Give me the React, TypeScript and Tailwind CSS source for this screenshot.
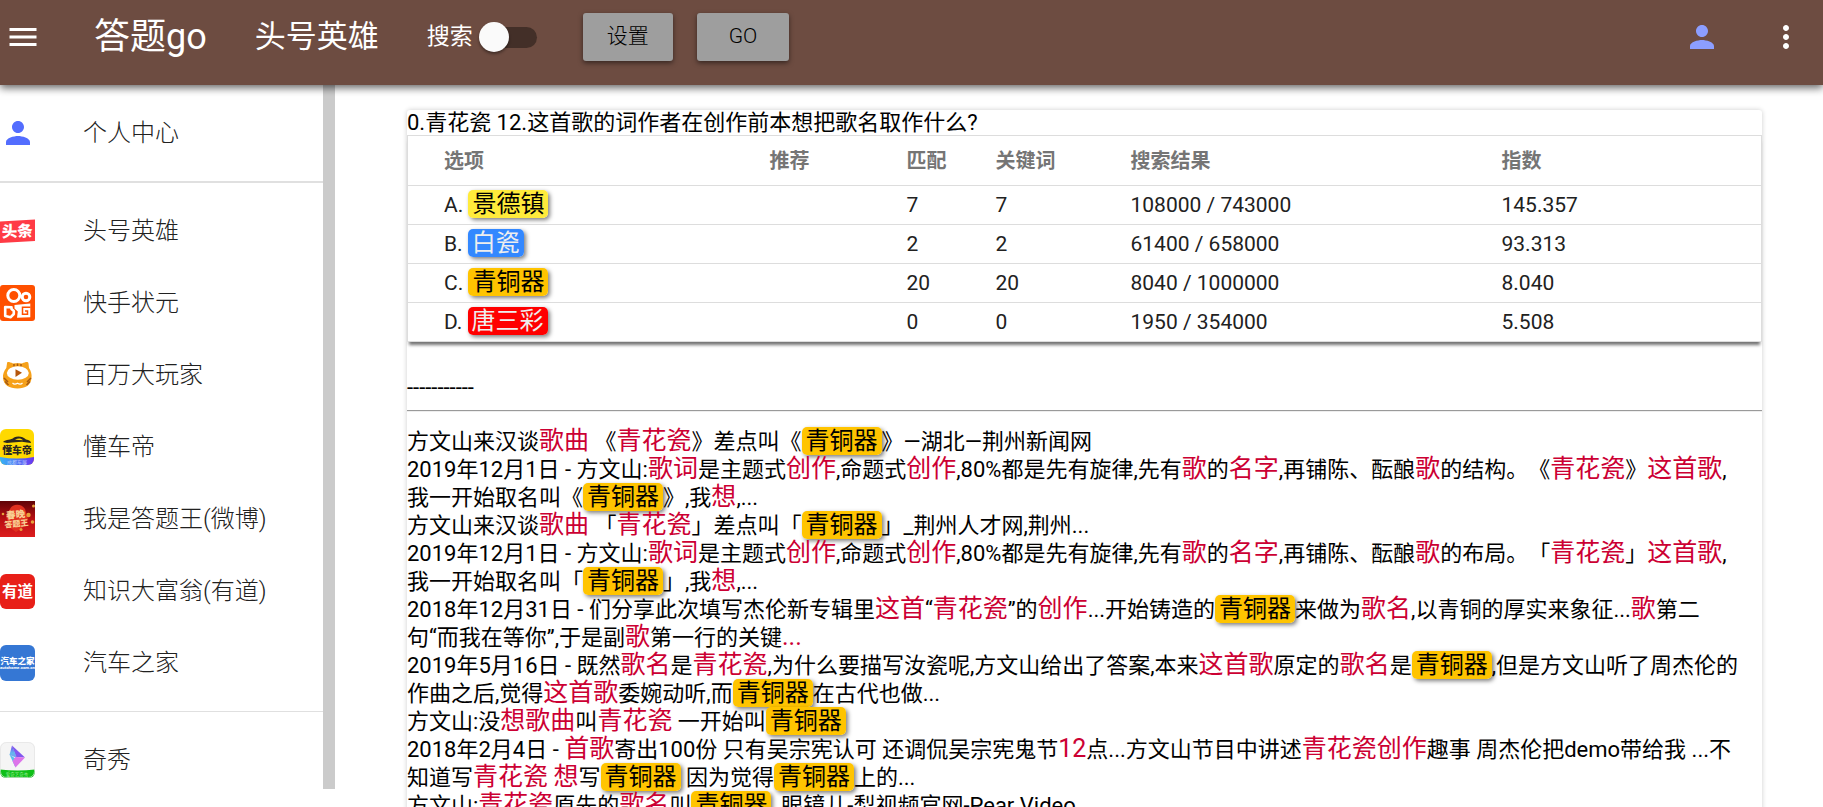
import React from "react";
import { MdMenu, MdMoreVert, MdPerson } from "react-icons/md";

const cjk = "'Noto Sans CJK SC', sans-serif";

function ToutiaoLogo() {
  return (
    <svg viewBox="0 0 35 36" className="h-9 w-[35px]" aria-hidden="true">
      <path d="M0 8.5 35 6.5V28L0 30Z" fill="#ff3b45" />
      <text x="17.3" y="23.8" textAnchor="middle" fontSize="15.5" fontWeight="900" fill="#fff" fontFamily={cjk} transform="rotate(-2 17 18)">头条</text>
    </svg>
  );
}

function KuaishouLogo() {
  return (
    <svg viewBox="0 0 35 36" className="h-9 w-[35px]" aria-hidden="true">
      <rect width="35" height="36" rx="3" fill="#ff5000" />
      <g fill="none" stroke="#fff" strokeWidth="3">
        <circle cx="13.8" cy="10.5" r="6" />
        <circle cx="26" cy="12" r="3.8" />
      </g>
      <path d="M5.2 22 11.5 22.3V24L13.800 26V29L10.5 32.3 5.2 31Z" fill="none" stroke="#fff" strokeWidth="2.6" strokeLinejoin="round" />
      <path d="M14.500 20 30.300 18.500V32.300L17 32.800 17.800 26.500 14.500 23.500Z" fill="#fff" />
      <path d="M30.500 22.300H22.500V29.300H27.500V26H25" fill="none" stroke="#ff5000" strokeWidth="1.500" />
    </svg>
  );
}

function PlayerLogo() {
  return (
    <svg viewBox="0 0 35 36" className="h-9 w-[35px]" aria-hidden="true">
      <path d="M7 6.5C7 4.5 9 4.8 13 6.6 16 6 19 6 22 6.6 26 4.8 28 4.5 28.5 6.5L29 11C31 14 32 17 31.5 21 31 28 25.5 31.5 17.5 31.5S3.500 28 3 21C2.600 17 4 14 6.300 11Z" fill="#f6a11a" />
      <path d="M4 21 8 25M31 21 27 25M5 24.500 8.500 28M30 24.500 26.500 28M14 7V9.500M17.500 6.500V9M21 7V9.500" stroke="#a65a12" strokeWidth="1.500" />
      <ellipse cx="17.800" cy="16" rx="11" ry="6.800" fill="#fff" />
      <path d="M15.500 12.200 22 15.800 15.500 20Z" fill="#b4560d" />
      <path d="M12.500 26Q14.500 28 17.500 26.200 20.500 28 22.500 26" fill="none" stroke="#fff" strokeWidth="1.200" />
    </svg>
  );
}

function DongchediLogo() {
  return (
    <svg viewBox="0 0 35 36" className="h-9 w-[35px]" aria-hidden="true">
      <defs>
        <linearGradient id="dcd">
          <stop offset="0" stopColor="#38b4f5" />
          <stop offset="1" stopColor="#6a35f2" />
        </linearGradient>
        <clipPath id="dcdClip"><rect width="34" height="36" rx="6" /></clipPath>
      </defs>
      <g clipPath="url(#dcdClip)">
        <rect width="34" height="36" fill="#ffd900" />
        <path d="M0 28Q17 31 34 28V36H0Z" fill="url(#dcd)" />
        <path d="M3 13C6 10 11 11.500 14 8.500 18 6.500 23 7.500 26 10.500 29 11 31 12 31 14L27 13.500 22 12.800 12 13.500 7 14Z" fill="#2a2720" />
        <path d="M15 10.800C18 9 21 9.200 23 11.200Z" fill="#ffd900" />
        <text x="17" y="24.500" textAnchor="middle" fontSize="9.800" fontWeight="900" fill="#2a2720" fontFamily={cjk}>懂车帝</text>
        <text x="17" y="34.500" textAnchor="middle" fontSize="5" fill="#d5e4ff" fontFamily={cjk}>成都车展</text>
      </g>
    </svg>
  );
}

function WeiboQuizLogo() {
  return (
    <svg viewBox="0 0 35 36" className="h-9 w-[35px]" aria-hidden="true">
      <defs>
        <linearGradient id="wbg" x2="0" y2="1">
          <stop offset="0" stopColor="#5f0306" />
          <stop offset=".5" stopColor="#b80f12" />
          <stop offset="1" stopColor="#dc1d1d" />
        </linearGradient>
      </defs>
      <rect width="35" height="36" fill="url(#wbg)" />
      <path d="M10 8C13 2 22 3 25 8L28 18 22 27 16 31 9 26 6 15Z" fill="#e0301f" />
      <g fill="#e7a13c">
        <circle cx="33.500" cy="5" r="1.500" />
        <circle cx="28.500" cy="14" r="2.200" />
        <circle cx="32.500" cy="21" r="1.800" />
        <circle cx="3" cy="13" r="1.300" />
        <circle cx="21" cy="28.500" r="1.500" />
      </g>
      <g fill="#f8cf93" fontWeight="900" fontFamily={cjk} textAnchor="middle" transform="rotate(-6 17 18)">
        <text x="16" y="17" fontSize="9.500">春晚</text>
        <text x="16" y="25.500" fontSize="8">答题王</text>
      </g>
    </svg>
  );
}

function YoudaoLogo() {
  return (
    <svg viewBox="0 0 35 36" className="h-9 w-[35px]" aria-hidden="true">
      <rect y="1" width="35" height="35" rx="6" fill="#e81f18" />
      <text x="17.500" y="24" textAnchor="middle" fontSize="15.500" fontWeight="700" fill="#fff" fontFamily={cjk}>有道</text>
    </svg>
  );
}

function AutohomeLogo() {
  return (
    <svg viewBox="0 0 35 36" className="h-9 w-[35px]" aria-hidden="true">
      <rect width="35" height="36" rx="6" fill="#3577d4" />
      <text x="17.500" y="18.500" textAnchor="middle" fontSize="8.500" fontWeight="900" fill="#fff" fontFamily={cjk}>汽车之家</text>
      <text x="17.500" y="23.800" textAnchor="middle" fontSize="4.300" fontWeight="700" fill="#fff" fontFamily="Roboto, sans-serif">autohome.com.cn</text>
    </svg>
  );
}

function QixiuLogo() {
  return (
    <svg viewBox="0 0 35 36" className="h-9 w-[35px]" aria-hidden="true">
      <defs>
        <clipPath id="qxClip"><rect width="35" height="36" rx="6" /></clipPath>
        <linearGradient id="qxa" x2="0" y2="1">
          <stop offset="0" stopColor="#7a3df0" />
          <stop offset=".6" stopColor="#62b9ee" />
          <stop offset="1" stopColor="#7f9bee" />
        </linearGradient>
      </defs>
      <g clipPath="url(#qxClip)">
        <rect width="35" height="36" fill="#f5f5f5" />
        <path d="M0 27.500Q17.500 29.500 35 27.500V36H0Z" fill="#0fbf17" />
        <path d="M12 3.500 25 15.500 16 15Z" fill="#8257ee" />
        <path d="M9.500 12.500 16 17 15.500 25.500Z" fill="#58c0ec" />
        <path d="M12 3.500 17 16 9.500 13Z" fill="url(#qxa)" />
        <path d="M25 15.500 15.500 15 12.500 19 15.500 25.500Z" fill="#dd74ea" />
        <text x="17" y="33.500" textAnchor="middle" fontSize="4.500" fill="#b5f5b0" fontFamily={cjk}>爱奇艺奇秀</text>
      </g>
      <rect x=".5" y=".5" width="34" height="35" rx="6" fill="none" stroke="#e4e4e4" strokeWidth=".7" />
    </svg>
  );
}

const channels = [
  { name: "头号英雄", Logo: ToutiaoLogo },
  { name: "快手状元", Logo: KuaishouLogo },
  { name: "百万大玩家", Logo: PlayerLogo },
  { name: "懂车帝", Logo: DongchediLogo },
  { name: "我是答题王(微博)", Logo: WeiboQuizLogo },
  { name: "知识大富翁(有道)", Logo: YoudaoLogo },
  { name: "汽车之家", Logo: AutohomeLogo },
];

const options = [
  { key: "A.", name: "景德镇", tone: "bg-[#ffeb3b] text-black", match: "7", words: "7", results: "108000 / 743000", score: "145.357" },
  { key: "B.", name: "白瓷", tone: "bg-[#3388ff] text-[#eeeeee]", match: "2", words: "2", results: "61400 / 658000", score: "93.313" },
  { key: "C.", name: "青铜器", tone: "bg-[#ffc400] text-black", match: "20", words: "20", results: "8040 / 1000000", score: "8.040" },
  { key: "D.", name: "唐三彩", tone: "bg-[#ff0000] text-[#eeeeee]", match: "0", words: "0", results: "1950 / 354000", score: "5.508" },
];

// *text* marks a matched keyword, [text] marks an answer option.
const lines = [
  "方文山来汉谈*歌曲* 《*青花瓷*》差点叫《[青铜器]》—湖北—荆州新闻网",
  "2019年12月1日 - 方文山:*歌词*是主题式*创作*,命题式*创作*,80%都是先有旋律,先有*歌*的*名字*,再铺陈、酝酿*歌*的结构。《*青花瓷*》*这首歌*,",
  "我一开始取名叫《[青铜器]》,我*想*,...",
  "方文山来汉谈*歌曲* 「*青花瓷*」差点叫「[青铜器]」_荆州人才网,荆州...",
  "2019年12月1日 - 方文山:*歌词*是主题式*创作*,命题式*创作*,80%都是先有旋律,先有*歌*的*名字*,再铺陈、酝酿*歌*的布局。「*青花瓷*」*这首歌*,",
  "我一开始取名叫「[青铜器]」,我*想*,...",
  "2018年12月31日 - 们分享此次填写杰伦新专辑里*这首*“*青花瓷*”的*创作*...开始铸造的[青铜器]来做为*歌名*,以青铜的厚实来象征...*歌*第二",
  "句“而我在等你”,于是副*歌*第一行的关键*...*",
  "2019年5月16日 - 既然*歌名*是*青花瓷*,为什么要描写汝瓷呢,方文山给出了答案,本来*这首歌*原定的*歌名*是[青铜器],但是方文山听了周杰伦的",
  "作曲之后,觉得*这首歌*委婉动听,而[青铜器]在古代也做...",
  "方文山:没*想歌曲*叫*青花瓷* 一开始叫[青铜器]",
  "2018年2月4日 - *首歌*寄出100份 只有吴宗宪认可 还调侃吴宗宪鬼节*12*点...方文山节目中讲述*青花瓷创作*趣事 周杰伦把demo带给我 ...不",
  "知道写*青花瓷* *想*写[青铜器] 因为觉得[青铜器]上的...",
  "方文山:*青花瓷*原先的*歌名*叫[青铜器]_眼镜儿-梨视频官网-Pear Video",
];

function Badge({ tone, children }: { tone: string; children: React.ReactNode }) {
  return (
    <span className={`rounded-[5px] px-1 text-2xl leading-none shadow-[2px_2px_4px_rgba(0,0,0,0.5)] ${tone}`}>
      {children}
    </span>
  );
}

function ResultLine({ source }: { source: string }) {
  return (
    <p className="whitespace-nowrap">
      {source.split(/(\*[^*]+\*|\[[^\]]+\])/).map((part, i) => {
        if (part.startsWith("*"))
          return <em key={i} className="text-[25px] leading-none text-[#cc0033] not-italic">{part.slice(1, -1)}</em>;
        if (part.startsWith("["))
          return <Badge key={i} tone="bg-[#ffc400] text-black">{part.slice(1, -1)}</Badge>;
        return part;
      })}
    </p>
  );
}

function NavItem({ name, children }: { name: string; children: React.ReactNode }) {
  return (
    <li>
      <a href="#" className="flex h-[72px] items-center gap-12 text-2xl font-light text-[#212121]">
        <span className="flex w-[35px] shrink-0 justify-center">{children}</span>
        {name}
      </a>
    </li>
  );
}

export default function App() {
  return (
    <div className="flex h-screen flex-col overflow-hidden bg-white font-[Roboto,'Noto_Sans_CJK_SC',sans-serif] [text-spacing-trim:space-all]">
      <header className="z-10 flex h-[85px] shrink-0 items-center bg-[#6d4c41] pr-[19px] pb-[11px] pl-[5px] text-white shadow-[0_3px_8px_rgba(0,0,0,0.6)]">
        <button type="button" aria-label="菜单"><MdMenu className="size-9" /></button>
        <h1 className="ml-[53px] text-4xl">答题go</h1>
        <span className="ml-12 text-[31px]">头号英雄</span>
        <label className="ml-12 flex items-center gap-3 text-[23px]">
          搜索
          <input
            type="checkbox"
            className="flex h-[21px] w-[52px] appearance-none items-center rounded-full bg-[#432f28] before:-ml-1.5 before:block before:size-[30px] before:shrink-0 before:rounded-full before:bg-[#fafafa] before:shadow-[0_2px_3px_rgba(0,0,0,0.4)] checked:justify-end"
          />
        </label>
        <button type="button" className="ml-[46px] h-12 rounded-[3px] bg-[#9e9e9e] px-6 text-[21px] font-light text-black shadow-[0_2px_5px_rgba(0,0,0,0.5)]">设置</button>
        <button type="button" className="ml-6 h-12 rounded-[3px] bg-[#9e9e9e] px-8 text-[21px] font-light text-black shadow-[0_2px_5px_rgba(0,0,0,0.5)]">GO</button>
        <button type="button" aria-label="个人中心" className="ml-auto text-[#8c9eff]"><MdPerson className="size-9" /></button>
        <button type="button" aria-label="更多" className="ml-12"><MdMoreVert className="size-9" /></button>
      </header>

      <div className="flex min-h-0 flex-1">
        <nav className="mb-[18px] w-[335px] shrink-0 overflow-hidden border-r-[12px] border-[#cbcbcb]">
          <ul className="border-b-2 border-[#e0e0e0] py-3">
            <NavItem name="个人中心"><MdPerson className="size-9 shrink-0 text-[#536dfe]" /></NavItem>
          </ul>
          <ul className="border-b border-[#e0e0e0] py-3">
            {channels.map(({ name, Logo }) => (
              <NavItem key={name} name={name}><Logo /></NavItem>
            ))}
          </ul>
          <ul className="py-3">
            <NavItem name="奇秀"><QixiuLogo /></NavItem>
          </ul>
        </nav>

        <main className="min-w-0 flex-1 overflow-hidden pt-[25px] pr-[61px] pl-[72px]">
          <article className="min-h-full rounded-[3px] text-[22px] leading-7 text-black shadow-[0_0_5px_rgba(0,0,0,0.2)]">
            <h2 className="leading-[25px]">0.青花瓷 12.这首歌的词作者在创作前本想把歌名取作什么?</h2>
            <table className="w-full table-fixed border-collapse text-left text-[21px] whitespace-nowrap text-[#212121] shadow-[0_5px_3px_-2px_rgba(0,0,0,0.55)]">
              <colgroup>
                <col className="w-[326px]" />
                <col className="w-[137px]" />
                <col className="w-[89px]" />
                <col className="w-[135px]" />
                <col className="w-[371px]" />
                <col />
              </colgroup>
              <thead className="bg-white text-[20px] text-[#757575]">
                <tr className="h-[50px] border border-[#dddddd]">
                  {["选项", "推荐", "匹配", "关键词", "搜索结果", "指数"].map((h) => (
                    <th key={h} scope="col" className="py-0 pl-9 font-bold">{h}</th>
                  ))}
                </tr>
              </thead>
              <tbody className="bg-white">
                {options.map((o) => (
                  <tr key={o.key} className="h-[39px] border border-[#dddddd]">
                    <td className="py-0 pl-9">{o.key} <Badge tone={o.tone}>{o.name}</Badge></td>
                    <td className="py-0 pl-9" />
                    <td className="py-0 pl-9">{o.match}</td>
                    <td className="py-0 pl-9">{o.words}</td>
                    <td className="py-0 pl-9">{o.results}</td>
                    <td className="py-0 pl-9">{o.score}</td>
                  </tr>
                ))}
              </tbody>
            </table>
            <p className="mt-8">-----------</p>
            <hr className="mt-2 mb-4 border-t border-b border-t-[#9a9a9a] border-b-[#eeeeee]" />
            {lines.map((line, i) => <ResultLine key={i} source={line} />)}
          </article>
        </main>
      </div>
    </div>
  );
}
